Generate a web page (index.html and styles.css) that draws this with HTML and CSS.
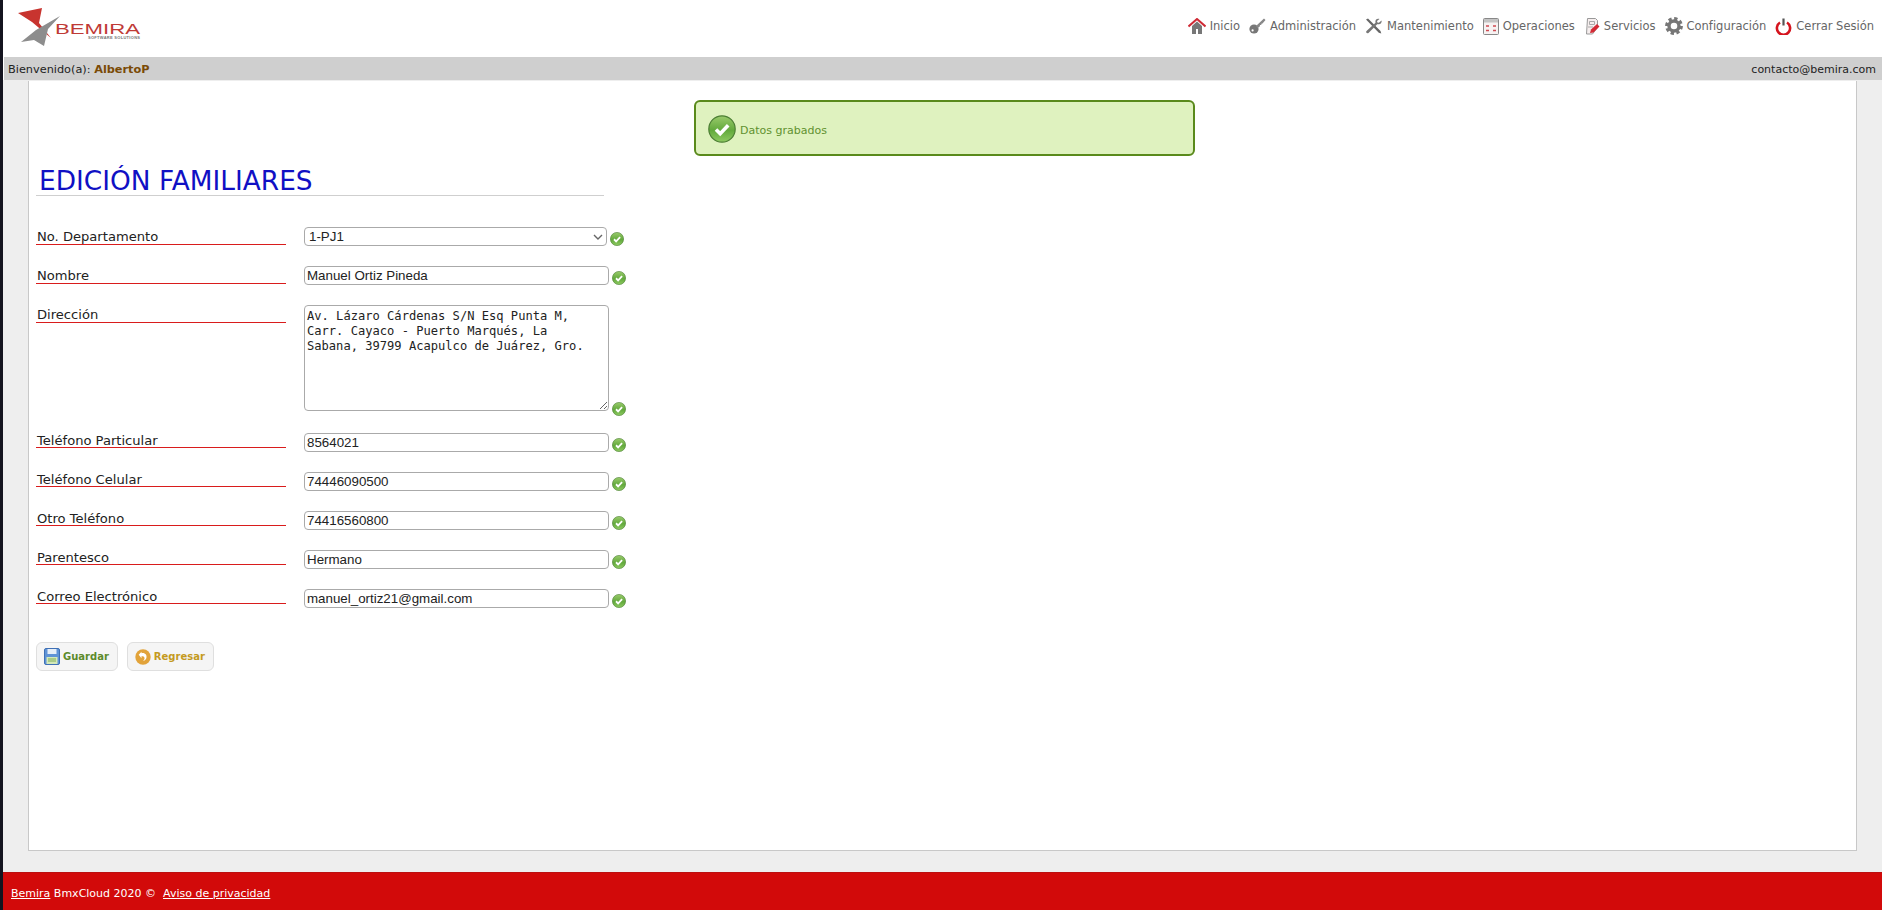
FILE: index.html
```html
<!DOCTYPE html>
<html lang="es">
<head>
    <meta charset="UTF-8">
    <title>Edición Familiares</title>
    <meta name="viewport" content="width=device-width, initial-scale=1.0">
    <link rel="stylesheet" href="styles.css">
</head>
<body>
<!-- Iconos compartidos -->
<svg class="oculto" width="0" height="0">
    <defs>
        <linearGradient id="verdeCheck" x1="0" y1="0" x2="0" y2="1">
            <stop offset="0" stop-color="#9acb6c"/>
            <stop offset="0.55" stop-color="#62a93c"/>
            <stop offset="1" stop-color="#8fcb62"/>
        </linearGradient>
        <symbol id="iconoCheck" viewBox="0 0 28 28">
            <circle cx="14" cy="14" r="13.2" fill="url(#verdeCheck)" stroke="#4c7f34" stroke-width="1.2"/>
            <path d="M8 14.5l4.2 4.2 8-8.4" fill="none" stroke="#fff" stroke-width="3.6"/>
        </symbol>
    </defs>
</svg>

<div class="pagina">
    <header class="cabecera">
        <svg class="logo" width="126" height="42" viewBox="0 0 126 42">
            <polygon points="0,6 24,1 21,16 33,31 14,15" fill="#c8342f"/>
            <polygon points="3,35 18,23 42,9 30,22 26,39 16,33" fill="#8d8d8d"/>
            <text x="37" y="26.5" class="logo-marca" textLength="85" lengthAdjust="spacingAndGlyphs">BEMIRA</text>
            <text x="70" y="31.5" class="logo-sub" textLength="52" lengthAdjust="spacing">SOFTWARE SOLUTIONS</text>
        </svg>
        <nav class="menu">
            <a href="#" class="menu-item">
                <svg width="18" height="16" viewBox="0 0 18 16"><path d="M4 8v8h4v-5h2v5h4V8L9 3.5z" fill="#777"/><path d="M0.5 8.5L9 1l8.5 7.5" fill="none" stroke="#cf2a35" stroke-width="2"/></svg>
                Inicio
            </a>
            <a href="#" class="menu-item">
                <svg width="17" height="16" viewBox="0 0 17 16"><circle cx="5" cy="11" r="4.6" fill="#777"/><path d="M7 8l8-7.5 1.5 1.5-3 3.5-1 .2-.3 1.2-1.2.2-.2 1.3L8.5 10z" fill="#888"/><circle cx="3.6" cy="12.4" r="1.1" fill="#fff"/></svg>
                Administración
            </a>
            <a href="#" class="menu-item">
                <svg width="18" height="17" viewBox="0 0 18 17"><path d="M1 1.5l2-1 12.5 12.5.8 2.5-2.5-.8z" fill="#666"/><path d="M16.5 2.5l-2.6 2.3-1.5-.4-.4-1.5L14.5 1C12 .2 9.8 2 10.5 4.7L1.5 13c-1.2 1.3.6 3 2 2l8.7-8.8c2.8.8 5-1.5 4.3-3.7z" fill="#777"/></svg>
                Mantenimiento
            </a>
            <a href="#" class="menu-item">
                <svg width="16" height="17" viewBox="0 0 16 17"><rect x="0.5" y="0.5" width="15" height="16" rx="1" fill="#f6f2f2" stroke="#888"/><rect x="1" y="1" width="14" height="3.5" fill="#c4c4c4"/><path d="M3 8h3M3 12.5h3M10 8h3M10 12.5h3" stroke="#cf4a52" stroke-width="1.6"/></svg>
                Operaciones
            </a>
            <a href="#" class="menu-item">
                <svg width="16" height="17" viewBox="0 0 16 17"><path d="M3.5 0.5h8l2 2v7l-5 6.5H2.5z" fill="#f6eeee" stroke="#999"/><path d="M5.5 3.5h5v3h-5zM4 9h5" fill="none" stroke="#aaa"/><path d="M6 15l1-3.5 6-5.5 2.5 2.5-6 6z" fill="#d42a35"/></svg>
                Servicios
            </a>
            <a href="#" class="menu-item">
                <svg width="18" height="18" viewBox="0 0 18 18"><circle cx="9" cy="9" r="5" fill="none" stroke="#777" stroke-width="3.4"/><circle cx="9" cy="9" r="7.4" fill="none" stroke="#777" stroke-width="3" stroke-dasharray="3.3 2.5"/></svg>
                Configuración
            </a>
            <a href="#" class="menu-item">
                <svg width="17" height="17" viewBox="0 0 17 17"><path d="M5 4.5a6.6 6.6 0 1 0 7 0" fill="none" stroke="#d5141e" stroke-width="2.6"/><path d="M8.5 0.5v7" stroke="#555" stroke-width="2.2"/></svg>
                Cerrar Sesión
            </a>
        </nav>
    </header>

    <div class="barra">
        <span class="barra-usuario">Bienvenido(a): <b class="usuario">AlbertoP</b></span>
        <span>contacto@bemira.com</span>
    </div>

    <main class="contenido">
        <section class="panel">
            <div class="alerta">
                <svg class="alerta-icono" width="28" height="28"><use href="#iconoCheck"/></svg>
                <span class="alerta-texto">Datos grabados</span>
            </div>

            <h1 class="titulo">EDICIÓN FAMILIARES</h1>

            <form class="formulario">
                <div class="fila">
                    <label class="etiqueta" for="departamento">No. Departamento</label>
                    <select class="campo campo-select" id="departamento">
                        <option>1-PJ1</option>
                    </select>
                    <svg class="check" width="14" height="14"><use href="#iconoCheck"/></svg>
                </div>
                <div class="fila">
                    <label class="etiqueta" for="nombre">Nombre</label>
                    <input class="campo" type="text" id="nombre" value="Manuel Ortiz Pineda">
                    <svg class="check" width="14" height="14"><use href="#iconoCheck"/></svg>
                </div>
                <div class="fila fila-area">
                    <label class="etiqueta" for="direccion">Dirección</label>
                    <textarea class="campo campo-area" id="direccion">Av. Lázaro Cárdenas S/N Esq Punta M, Carr. Cayaco - Puerto Marqués, La Sabana, 39799 Acapulco de Juárez, Gro.</textarea>
                    <svg class="check" width="14" height="14"><use href="#iconoCheck"/></svg>
                </div>
                <div class="fila fila-baja">
                    <label class="etiqueta" for="telParticular">Teléfono Particular</label>
                    <input class="campo" type="text" id="telParticular" value="8564021">
                    <svg class="check" width="14" height="14"><use href="#iconoCheck"/></svg>
                </div>
                <div class="fila fila-baja">
                    <label class="etiqueta" for="telCelular">Teléfono Celular</label>
                    <input class="campo" type="text" id="telCelular" value="74446090500">
                    <svg class="check" width="14" height="14"><use href="#iconoCheck"/></svg>
                </div>
                <div class="fila fila-baja">
                    <label class="etiqueta" for="telOtro">Otro Teléfono</label>
                    <input class="campo" type="text" id="telOtro" value="74416560800">
                    <svg class="check" width="14" height="14"><use href="#iconoCheck"/></svg>
                </div>
                <div class="fila fila-baja">
                    <label class="etiqueta" for="parentesco">Parentesco</label>
                    <input class="campo" type="text" id="parentesco" value="Hermano">
                    <svg class="check" width="14" height="14"><use href="#iconoCheck"/></svg>
                </div>
                <div class="fila fila-baja">
                    <label class="etiqueta" for="correo">Correo Electrónico</label>
                    <input class="campo" type="text" id="correo" value="manuel_ortiz21@gmail.com">
                    <svg class="check" width="14" height="14"><use href="#iconoCheck"/></svg>
                </div>

                <div class="botones">
                    <button type="button" class="boton boton-guardar">
                        <svg width="16" height="17" viewBox="0 0 16 17"><rect x="0.5" y="0.5" width="15" height="16" rx="1.5" fill="#5f93d6" stroke="#3f70b5"/><rect x="3.5" y="1" width="9" height="5" fill="#e6eef8"/><rect x="2.5" y="9" width="11" height="7" fill="#d3e8b8"/><path d="M4 11h8M4 13h8" stroke="#7fae57"/></svg>
                        Guardar
                    </button>
                    <button type="button" class="boton boton-regresar">
                        <svg width="16" height="16" viewBox="0 0 16 16"><circle cx="8" cy="8" r="7.7" fill="#e2a33a"/><path d="M6.5 4.2c3.8-.6 5.8 2.2 4.8 5-.5 1.4-1.7 2.500-3.300 2.800 1.300-1.100 1.800-2.400 1.400-3.500-.4-1-1.400-1.500-2.900-1.300v2L3.700 5.800 6.500 2.800z" fill="#fff"/></svg>
                        Regresar
                    </button>
                </div>
            </form>
        </section>
    </main>

    <footer class="pie">
        <a href="#">Bemira</a> BmxCloud 2020 &copy; &nbsp;<a href="#">Aviso de privacidad</a>
    </footer>
</div>
</body>
</html>
```

FILE: styles.css
```css
* {
    box-sizing: border-box;
}

html, body {
    height: 100%;
}

body {
    background-color: #14141f;
    font-family: "DejaVu Sans", sans-serif;
    font-size: 11px;
    color: #222;
    margin: 0;
    padding-left: 3px;
    overflow: hidden;
}

.oculto {
    display: block;
    height: 0;
}

.pagina {
    display: flex;
    flex-direction: column;
    height: 100vh;
    background-color: #fff;
}

/* cabecera */
.cabecera {
    height: 57px;
    display: flex;
    justify-content: space-between;
    align-items: flex-start;
    padding: 0 8px 0 15px;
}

.logo {
    margin-top: 7px;
}

.logo-marca {
    font-family: "Liberation Sans", sans-serif;
    font-size: 14px;
    fill: #bf3a36;
}

.logo-sub {
    font-family: "Liberation Sans", sans-serif;
    font-size: 4px;
    font-weight: bold;
    fill: #777;
}

.menu {
    display: flex;
    gap: 9px;
    margin-top: 17px;
}

.menu-item {
    display: flex;
    align-items: center;
    gap: 4px;
    height: 18px;
    color: #666;
    font-size: 11.5px;
    text-decoration: none;
}

/* barra de usuario */
.barra {
    height: 23px;
    margin-left: 1px;
    padding: 2px 6px 0 4px;
    background-color: #cfcfcf;
    display: flex;
    justify-content: space-between;
    align-items: center;
    font-size: 11px;
}

.barra-usuario {
    font-size: 11.3px;
}

.usuario {
    color: #7a4a06;
}

/* contenido */
.contenido {
    flex: 1;
    background-color: #eeeeee;
    padding: 1px 25px 21px 25px;
    display: flex;
}

.panel {
    flex: 1;
    background-color: #fff;
    border: 1px solid #c8c8c8;
    border-top: none;
    padding: 19px 0 0 7px;
}

.alerta {
    width: 501px;
    height: 56px;
    margin-left: 658px;
    padding: 2px 12px 0;
    display: flex;
    align-items: center;
    gap: 4px;
    background-color: #dff2bf;
    border: 2px solid #5a8a1c;
    border-radius: 6px;
    color: #5f9130;
    font-size: 11px;
}

.alerta-icono {
    flex: none;
}

.alerta-texto {
    padding-top: 2px;
}

.titulo {
    width: 568px;
    height: 40px;
    margin: 0;
    padding: 7px 0 0 3px;
    border-bottom: 1px solid #cfcfcf;
    color: #1010c4;
    font-size: 26.4px;
    font-weight: normal;
    line-height: 35px;
    font-family: "DejaVu Sans", sans-serif;
}

/* formulario */
.formulario {
    margin-top: 31px;
}

.fila {
    display: flex;
    align-items: flex-end;
    margin-bottom: 20px;
}

.etiqueta {
    align-self: flex-start;
    width: 250px;
    height: 18px;
    margin-right: 18px;
    padding: 1px 0 0 1px;
    border-bottom: 1px solid #d91c1c;
    font-size: 13.1px;
    line-height: 17px;
}

.fila-baja .etiqueta {
    height: 15px;
    padding-top: 0;
    line-height: 15px;
}

.campo {
    width: 305px;
    height: 19px;
    padding: 0 2px;
    border: 1px solid #aaa;
    border-radius: 4px;
    background-color: #fff;
    color: #222;
    font-family: "Liberation Sans", sans-serif;
    font-size: 13.33px;
}

.campo-select {
    width: 303px;
    padding-left: 4px;
    appearance: none;
    background-image: url("data:image/svg+xml,%3Csvg xmlns='http://www.w3.org/2000/svg' width='10' height='6'%3E%3Cpath d='M1 1l4 4 4-4' fill='none' stroke='%23666' stroke-width='1.4'/%3E%3C/svg%3E");
    background-repeat: no-repeat;
    background-position: right 3px center;
}

.campo-area {
    height: 106px;
    padding: 3px 12px 2px 2px;
    font-family: "DejaVu Sans Mono", monospace;
    font-size: 12.1px;
    line-height: 15px;
}

.check {
    flex: none;
    margin-left: 3px;
}

.fila-area {
    margin-bottom: 22px;
}

.fila-area .check {
    margin-bottom: -5px;
}

.botones {
    display: flex;
    gap: 9px;
    margin-top: 34px;
}

.boton {
    height: 29px;
    padding: 0 8px 0 7px;
    display: flex;
    align-items: center;
    gap: 3px;
    background-color: #f5f5f5;
    border: 1px solid #dfdfdf;
    border-radius: 6px;
    font-family: "DejaVu Sans", sans-serif;
    font-size: 10px;
    font-weight: bold;
    cursor: pointer;
}

.boton-guardar {
    color: #5c8a2b;
}

.boton-regresar {
    color: #c49a1e;
}

/* pie */
.pie {
    height: 38px;
    padding: 14px 0 0 8px;
    background-color: #d20a0a;
    border-top: 1px solid #bb0f0f;
    color: #fff;
    font-size: 11px;
}

.pie a {
    color: #fff;
}
```
